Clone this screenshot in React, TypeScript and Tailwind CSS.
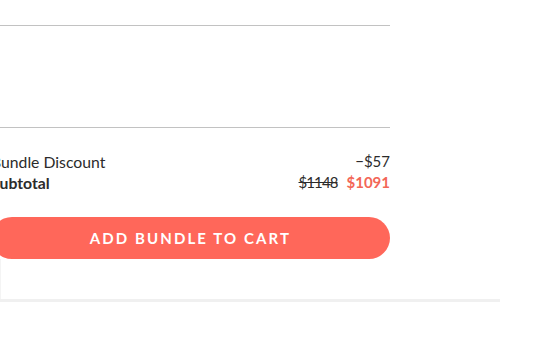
import React from "react";

function BundleSummary() {
  return (
    <div className="-ml-[9px] w-[399px]">
      <div className="h-[25px]" />
      <div className="border-t border-[#c2c2c2]" />
      <div className="h-[101px]" />
      <div className="border-t border-[#c2c2c2]" />
      <div className="pt-[23px] text-[15px] leading-[21px] text-[#2b2b2b]">
        <div className="flex items-center justify-between">
          <span className="text-[15.75px]">Bundle Discount</span>
          <span>−$57</span>
        </div>
        <div className="flex items-center justify-between font-bold">
          <span className="text-[15.75px]">Subtotal</span>
          <span className="flex items-center gap-[9px]">
            <span className="font-normal tracking-[-0.06em] line-through">$1148</span>
            <span className="text-[#f36657]">$1091</span>
          </span>
        </div>
      </div>
      <button className="mt-[24px] flex h-[42px] w-full items-center justify-center rounded-full bg-[#ff675a] text-[15px] font-bold tracking-[0.14em] text-white">
        ADD BUNDLE TO CART
      </button>
    </div>
  );
}

export default function App() {
  return (
    <div
      className="h-[340px] w-[540px] overflow-hidden bg-white"
      style={{ fontFamily: "Lato, 'Open Sans', sans-serif" }}
    >
      <div className="w-[500px]">
        <BundleSummary />
        <div className="h-[40px] border-l border-[#f4f4f4]" />
        <div className="h-[3px] bg-[#f0f0f0]" />
      </div>
    </div>
  );
}
